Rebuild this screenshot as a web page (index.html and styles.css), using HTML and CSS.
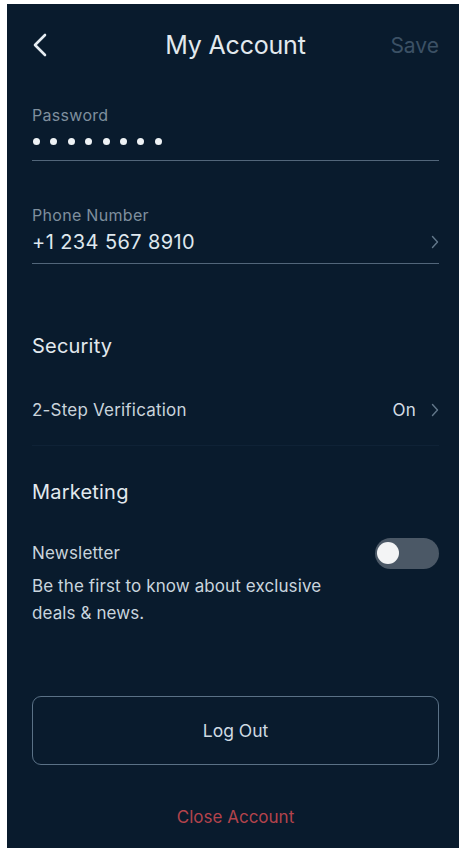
FILE: index.html
```html
<!DOCTYPE html>
<html lang="en">
<head>
<meta charset="UTF-8" />
<meta name="viewport" content="width=device-width, initial-scale=1" />
<title>My Account</title>
<link rel="stylesheet" href="styles.css">
</head>
<body>
<main class="screen" aria-label="My Account">
  <header class="top-bar">
    <button class="back-btn" aria-label="Back">
      <svg width="16" height="24" viewBox="0 0 16 24"><path d="M13 2 L3 12 L13 22" fill="none" stroke="#e6ecf1" stroke-width="2.6" stroke-linecap="round" stroke-linejoin="round"/></svg>
    </button>
    <h1>My Account</h1>
    <span class="save">Save</span>
  </header>

  <div class="field field-password">
    <div class="field-label">Password</div>
    <div class="dots">
      <span></span><span></span><span></span><span></span><span></span><span></span><span></span><span></span>
    </div>
  </div>

  <div class="field field-phone">
    <div class="field-label">Phone Number</div>
    <div class="field-value">
      <span>+1 234 567 8910</span>
      <svg class="chev" width="8" height="14" viewBox="0 0 8 14"><path d="M1.5 1.5 L6.5 7 L1.5 12.5" fill="none" stroke="#62778a" stroke-width="1.4" stroke-linecap="round" stroke-linejoin="round"/></svg>
    </div>
  </div>

  <h2 class="section-title security">Security</h2>
  <div class="row verify-row">
    <span>2-Step Verification</span>
    <span class="row-right">On
      <svg class="chev" width="8" height="14" viewBox="0 0 8 14"><path d="M1.5 1.5 L6.5 7 L1.5 12.5" fill="none" stroke="#62778a" stroke-width="1.4" stroke-linecap="round" stroke-linejoin="round"/></svg>
    </span>
  </div>

  <h2 class="section-title marketing">Marketing</h2>
  <div class="row newsletter-row">
    <span>Newsletter</span>
    <div class="toggle" role="switch" aria-checked="false"><span class="knob"></span></div>
  </div>
  <p class="desc">Be the first to know about exclusive<br>deals &amp; news.</p>

  <button class="logout-btn">Log Out</button>
  <a class="close-link" href="#">Close Account</a>
</main>
</body>
</html>
```

FILE: styles.css
```css
body {
  margin: 0;
  background: #ffffff;
  font-family: Inter, "Open Sans", sans-serif;
}
.screen {
  margin: 4px 6px 0 7px;
  height: 844px;
  background: #091b2d;
  color: #d9e2e9;
  padding: 0 20px 0 25px;
  box-sizing: border-box;
  display: flex;
  flex-direction: column;
}
.top-bar {
  height: 82px;
  display: flex;
  align-items: center;
  justify-content: space-between;
}
.back-btn {
  background: none;
  border: none;
  padding: 0;
  width: 60px;
  display: flex;
}
.top-bar h1 {
  margin: 0;
  font-size: 25px;
  font-weight: 400;
  color: #e2e9ee;
  letter-spacing: -0.2px;
}
.save {
  width: 60px;
  text-align: right;
  font-size: 21px;
  color: #3c5165;
}
.field {
  border-bottom: 1px solid #52667a;
}
.field-label {
  font-size: 16px;
  line-height: 20px;
  letter-spacing: 0.3px;
  color: #7f8f9e;
}
.field-password {
  padding-top: 19px;
  padding-bottom: 9px;
}
.dots {
  display: flex;
  gap: 10.4px;
  align-items: center;
  height: 20px;
  margin-top: 6px;
  padding-left: 1px;
}
.dots span {
  width: 7px;
  height: 7px;
  border-radius: 50%;
  background: #eef2f5;
}
.field-phone {
  padding-top: 44px;
  padding-bottom: 9px;
}
.field-value {
  margin-top: 5px;
  display: flex;
  justify-content: space-between;
  align-items: center;
  font-size: 20px;
  line-height: 24px;
  letter-spacing: 0.4px;
  color: #dfe7ed;
}
.chev {
  display: block;
}
.section-title {
  margin: 0;
  font-size: 20px;
  line-height: 24px;
  font-weight: 400;
  letter-spacing: 0.2px;
  color: #e2e9ee;
}
.security {
  margin-top: 70px;
}
.row {
  display: flex;
  justify-content: space-between;
  align-items: center;
  font-size: 17px;
  letter-spacing: 0.2px;
  color: #c9d4dc;
}
.verify-row {
  margin-top: 17px;
  height: 70px;
  border-bottom: 1px solid #0f2236;
}
.row-right {
  display: flex;
  align-items: center;
  gap: 15px;
  color: #d6dfe6;
}
.marketing {
  margin-top: 34px;
}
.newsletter-row {
  margin-top: 34px;
  height: 30px;
}
.toggle {
  width: 64px;
  height: 31px;
  border-radius: 16px;
  background: #4b5866;
  display: flex;
  align-items: center;
  padding-left: 2px;
  box-sizing: border-box;
}
.knob {
  width: 22px;
  height: 22px;
  border-radius: 50%;
  background: #f3f4f5;
}
.desc {
  margin: 5px 0 0;
  font-size: 17px;
  line-height: 27px;
  letter-spacing: 0.1px;
  color: #c9d5de;
}
.logout-btn {
  margin-top: 69px;
  height: 69px;
  background: transparent;
  border: 1.5px solid #5a7186;
  border-radius: 9px;
  color: #cfdae3;
  font-family: inherit;
  font-size: 17.5px;
  width: 100%;
}
.close-link {
  margin-top: 40px;
  text-align: center;
  font-size: 17px;
  line-height: 24px;
  color: #b3434c;
  text-decoration: none;
}
```
